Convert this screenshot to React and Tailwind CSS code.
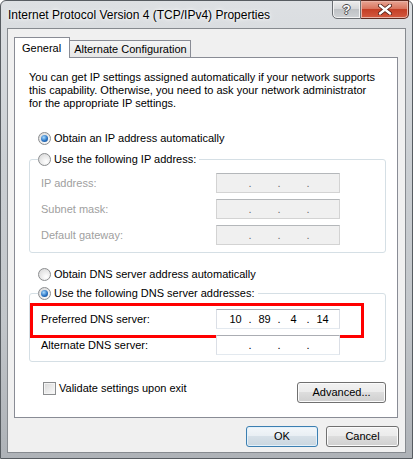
import React from 'react';

const Radio = ({ checked }) => (
    <span className="w-[13px] h-[13px] rounded-full border border-[#8b8d8f] bg-[radial-gradient(circle_at_65%_70%,#ffffff,#d4d4d4)] flex items-center justify-center shrink-0">
        {checked && (
            <span className="w-[7px] h-[7px] rounded-full bg-[radial-gradient(circle_at_40%_35%,#a9dcff,#2a74c4_55%,#0d3f7e)]" />
        )}
    </span>
);

const RadioOption = ({ checked, label }) => (
    <span className="flex items-center h-[15px] gap-[3px] whitespace-nowrap">
        <Radio checked={checked} />
        <span>{label}</span>
    </span>
);

const Checkbox = () => (
    <span className="w-[13px] h-[13px] border border-[#8b8d8f] bg-[linear-gradient(135deg,#d8d8d8,#fbfbfb)] shadow-[inset_0_0_0_1px_#f4f4f4] shrink-0" />
);

const IpBox = ({ values = ['', '', '', ''], disabled }) => (
    <div
        className={
            disabled
                ? 'w-[124px] h-[20px] border border-[#d3d3d3] border-t-[#b4b7ba] bg-[#f0f0f0] flex items-center pl-[6px] text-[#6d6d6d]'
                : 'w-[124px] h-[20px] border border-[#dbdfe6] border-t-[#abadb3] border-b-[#e3e9ef] bg-white flex items-center pl-[6px] text-black'
        }
    >
        {values.map((v, i) => (
            <React.Fragment key={i}>
                <span className="w-[25px] text-center">{v}</span>
                {i < 3 && <span className="w-[4px] flex justify-center">.</span>}
            </React.Fragment>
        ))}
    </div>
);

const FieldRow = ({ label, disabled, values, children }) => (
    <div className="relative flex items-center h-[20px]">
        <span className={disabled ? 'w-[178px] pl-[3px] text-[#a0a0a0]' : 'w-[178px] pl-[3px]'}>{label}</span>
        <IpBox disabled={disabled} values={values} />
        {children}
    </div>
);

const WinButton = ({ children, isDefault, className }) => (
    <button
        className={
            (isDefault
                ? 'border-[#3c7fb1] bg-[linear-gradient(#f3f7fa_0%,#e8eef3_50%,#d6e0e8_50%,#cad6df_100%)] shadow-[inset_0_0_0_1px_#e3f1fb] '
                : 'border-[#707070] bg-[linear-gradient(#f2f2f2_0%,#ebebeb_50%,#dddddd_50%,#cfcfcf_100%)] shadow-[inset_0_0_0_1px_#fbfbfb] ') +
            'h-[21px] rounded-[3px] border flex items-center justify-center leading-none ' +
            className
        }
    >
        {children}
    </button>
);

export default function App() {
    return (
        <div className="w-[414px] h-[461px] bg-white overflow-hidden font-['Liberation_Sans',Arial,sans-serif] text-[11px] text-black">
            <div className="w-[413px] h-[459px] rounded-t-[6px] border border-[#575c61] bg-[linear-gradient(180deg,#dde0e3_0%,#cbcfd3_35%,#c2c6ca_70%,#aeb2b7_100%)] flex flex-col">
                {/* title bar */}
                <div className="h-[27px] flex items-start pl-[7px] pr-[3px] shrink-0">
                    <div className="pt-[7px] text-[12px] leading-[15px] whitespace-nowrap [text-shadow:0_0_6px_#ffffff,0_0_3px_#ffffff]">
                        Internet Protocol Version 4 (TCP/IPv4) Properties
                    </div>
                    <div className="ml-auto flex mt-[-1px]">
                        <div className="w-[29px] h-[19px] rounded-bl-[5px] border border-[#6b6f73] bg-[linear-gradient(#eeeeee_0%,#d6d8da_45%,#bfc2c5_50%,#cfd2d5_100%)] shadow-[inset_0_0_0_1px_#f2f2f2] flex items-center justify-center">
                            <span className="text-white font-bold text-[13px] leading-none [text-shadow:1px_0_0_#4a4a4a,-1px_0_0_#4a4a4a,0_1px_0_#4a4a4a,0_-1px_0_#4a4a4a]">?</span>
                        </div>
                        <div className="w-[48px] h-[19px] rounded-br-[5px] border border-l-0 border-[#5e2a20] bg-[linear-gradient(#e8a594_0%,#d9755f_45%,#c43f26_50%,#d45a40_100%)] shadow-[inset_0_0_0_1px_#eab3a6] flex items-center justify-center">
                            <svg width="14" height="11" viewBox="0 0 14 11">
                                <path d="M2 1.5 L12 9.5 M12 1.5 L2 9.5" stroke="#4a1a12" strokeWidth="4" strokeLinecap="round" />
                                <path d="M2 1.5 L12 9.5 M12 1.5 L2 9.5" stroke="#ffffff" strokeWidth="2.4" strokeLinecap="round" />
                            </svg>
                        </div>
                    </div>
                </div>

                {/* client area */}
                <div className="flex-1 mx-[6px] mb-[5px] border border-[#868a8f] bg-[#f0f0f0] flex flex-col pt-[8px] pl-[6px] pr-[7px]">
                    {/* tabs */}
                    <div className="flex items-end whitespace-nowrap">
                        <div className="relative h-[21px] mb-[-1px] bg-white border border-b-0 border-[#898c95] pl-[7px] pr-[8px] flex items-center">
                            General
                        </div>
                        <div className="h-[17px] w-[121px] border-t border-r border-[#898c95] bg-[linear-gradient(#f5f5f5,#e6e6e6)] pl-[4px] flex items-center">
                            Alternate Configuration
                        </div>
                    </div>

                    {/* tab pane */}
                    <div className="border border-[#898c95] bg-white flex flex-col pb-[14px]">
                        <p className="mt-[13px] ml-[14px] leading-[13px] whitespace-nowrap">
                            You can get IP settings assigned automatically if your network supports
                            <br />
                            this capability. Otherwise, you need to ask your network administrator
                            <br />
                            for the appropriate IP settings.
                        </p>

                        <div className="mt-[21px] ml-[23px]">
                            <RadioOption checked label="Obtain an IP address automatically" />
                        </div>

                        <fieldset className="mt-[6px] ml-[14px] mr-[11px] border border-[#d5dfe5] rounded-[3px] px-[8px] pt-[6px] pb-[7px]">
                            <legend className="pr-[3px]">
                                <RadioOption label="Use the following IP address:" />
                            </legend>
                            <div className="flex flex-col gap-[6px]">
                                <FieldRow label="IP address:" disabled />
                                <FieldRow label="Subnet mask:" disabled />
                                <FieldRow label="Default gateway:" disabled />
                            </div>
                        </fieldset>

                        <div className="mt-[14px] ml-[23px]">
                            <RadioOption label="Obtain DNS server address automatically" />
                        </div>

                        <fieldset className="mt-[4px] ml-[14px] mr-[11px] border border-[#d5dfe5] rounded-[3px] px-[8px] pt-[8px] pb-[6px]">
                            <legend className="pr-[3px]">
                                <RadioOption checked label="Use the following DNS server addresses:" />
                            </legend>
                            <div className="flex flex-col gap-[6px]">
                                <FieldRow label="Preferred DNS server:" values={['10', '89', '4', '14']}>
                                    <div className="absolute left-[-8px] top-[-6px] w-[334px] h-[35px] border-[3px] border-[#ff0000] pointer-events-none" />
                                </FieldRow>
                                <FieldRow label="Alternate DNS server:" />
                            </div>
                        </fieldset>

                        <div className="mt-[20px] ml-[28px] mr-[11px] flex items-start justify-between">
                            <div className="flex items-center h-[13px] gap-[3px]">
                                <Checkbox />
                                <span>Validate settings upon exit</span>
                            </div>
                            <WinButton className="w-[89px]">Advanced...</WinButton>
                        </div>
                    </div>

                    {/* dialog buttons */}
                    <div className="mt-[8px] mr-[-1px] flex justify-end gap-[8px]">
                        <WinButton isDefault className="w-[72px]">OK</WinButton>
                        <WinButton className="w-[73px]">Cancel</WinButton>
                    </div>
                </div>
            </div>
        </div>
    );
}
